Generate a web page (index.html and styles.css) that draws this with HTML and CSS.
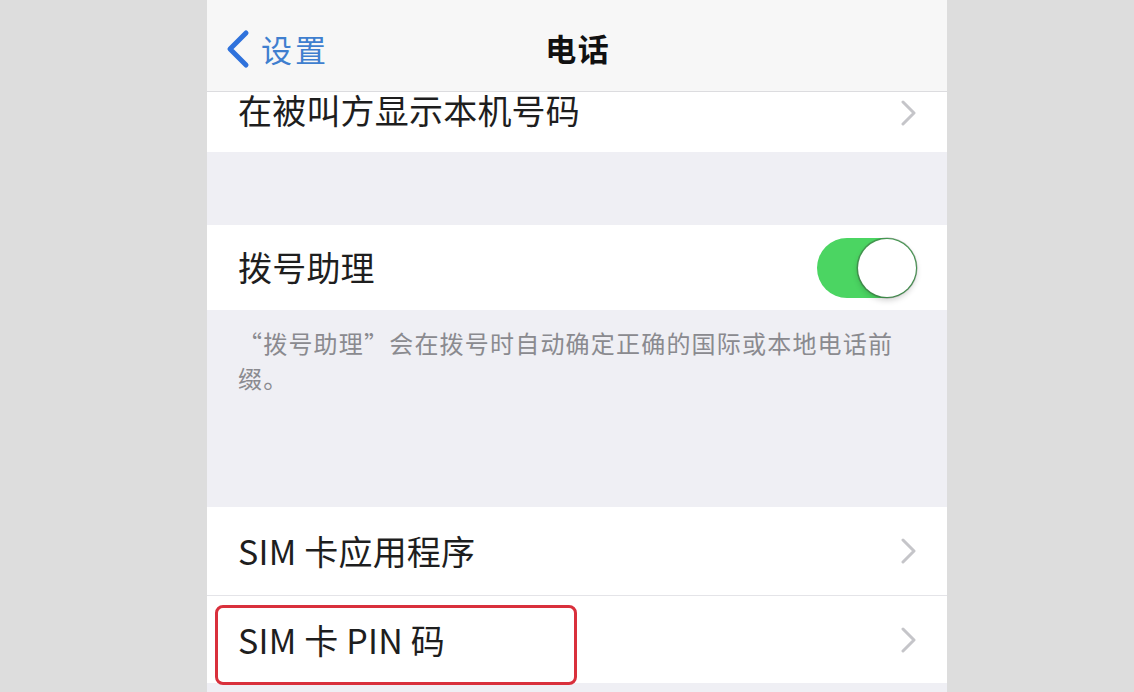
FILE: index.html
```html
<!DOCTYPE html>
<html lang="zh-CN">
<head>
<meta charset="utf-8">
<title>电话</title>
<link rel="stylesheet" href="styles.css">
</head>
<body>
<div class="phone">
  <header class="nav">
    <div class="back">
      <svg class="back-icon" width="28" height="40" viewBox="0 0 28 40"><polyline points="22,4 6,20 22,36" fill="none" stroke="#2f72dc" stroke-width="5" stroke-linecap="round" stroke-linejoin="round"/></svg>
      <span class="back-text">设置</span>
    </div>
    <div class="title">电话</div>
    <div></div>
  </header>

  <div class="row row-top">
    <span class="label">在被叫方显示本机号码</span>
    <svg class="chev" width="18" height="26" viewBox="0 0 18 26"><polyline points="4,2 15,13 4,24" fill="none" stroke="#c5c5c9" stroke-width="3" stroke-linecap="round" stroke-linejoin="round"/></svg>
  </div>

  <div class="gap"></div>

  <div class="row row-toggle">
    <span class="label">拨号助理</span>
    <div class="toggle"><div class="knob"></div></div>
  </div>

  <div class="footer">“拨号助理”会在拨号时自动确定正确的国际或本地电话前缀。</div>

  <div class="row row-sim">
    <span class="label">SIM 卡应用程序</span>
    <svg class="chev" width="18" height="26" viewBox="0 0 18 26"><polyline points="4,2 15,13 4,24" fill="none" stroke="#c5c5c9" stroke-width="3" stroke-linecap="round" stroke-linejoin="round"/></svg>
  </div>
  <div class="row row-sim sep">
    <span class="label">SIM 卡 PIN 码</span>
    <svg class="chev" width="18" height="26" viewBox="0 0 18 26"><polyline points="4,2 15,13 4,24" fill="none" stroke="#c5c5c9" stroke-width="3" stroke-linecap="round" stroke-linejoin="round"/></svg>
  </div>

  <div class="highlight"></div>
</div>
</body>
</html>
```

FILE: styles.css
```css
html, body {
  margin: 0;
  padding: 0;
}
body {
  background: #dddddd;
  width: 1134px;
  height: 692px;
  overflow: hidden;
  font-family: "Noto Sans CJK SC", "Noto Sans", sans-serif;
}
.phone {
  position: relative;
  margin-left: 207px;
  width: 740px;
  height: 692px;
  background: #efeff4;
  overflow: hidden;
}
.nav {
  height: 91px;
  background: #f7f7f7;
  border-bottom: 1px solid #dcdcdf;
  display: grid;
  grid-template-columns: 1fr auto 1fr;
  align-items: center;
}
.back {
  display: flex;
  align-items: center;
  padding-left: 17px;
  margin-top: 6px;
}
.back-icon {
  display: block;
}
.back-text {
  margin-left: 9px;
  font-size: 31px;
  letter-spacing: 3px;
  color: #3f7fcf;
  line-height: 40px;
}
.title {
  font-size: 31px;
  font-weight: 600;
  letter-spacing: 1.5px;
  color: #111;
  margin-top: 4px;
  padding-left: 1.5px;
}
.row {
  background: #ffffff;
  display: flex;
  align-items: center;
  justify-content: space-between;
  padding: 0 30px 0 31px;
  box-sizing: border-box;
}
.label {
  color: #1e1e1e;
  font-size: 34px;
  letter-spacing: 0.2px;
  line-height: 42px;
  white-space: nowrap;
}
.chev {
  display: block;
}
.row-top {
  height: 60px;
  padding-bottom: 24px;
}
.row-top .chev {
  margin-top: 6px;
}
.gap {
  height: 73px;
}
.row-toggle {
  height: 85px;
}
.row-toggle .label {
  margin-top: -2px;
}
.toggle {
  width: 100px;
  height: 60px;
  border-radius: 30px;
  background: #4bd562;
  position: relative;
}
.knob {
  position: absolute;
  top: 1px;
  right: 1px;
  width: 58px;
  height: 58px;
  border-radius: 50%;
  background: #fff;
  box-shadow: 0 0 0 1.5px rgba(60, 80, 60, 0.45), 0 3px 6px rgba(0, 0, 0, 0.2);
}
.footer {
  height: 197px;
  box-sizing: border-box;
  padding: 15px 50px 0 31px;
  font-size: 24px;
  letter-spacing: 1.2px;
  line-height: 35px;
  color: #8a8a8f;
}
.row-sim {
  height: 88px;
}
.row-sim .label {
  margin-top: 0;
}
.row-sim.sep {
  border-top: 1px solid #e4e4e8;
}
.highlight {
  position: absolute;
  left: 8px;
  top: 605px;
  width: 362px;
  height: 80px;
  box-sizing: border-box;
  border: 3px solid #d9303c;
  border-radius: 8px;
}
```
